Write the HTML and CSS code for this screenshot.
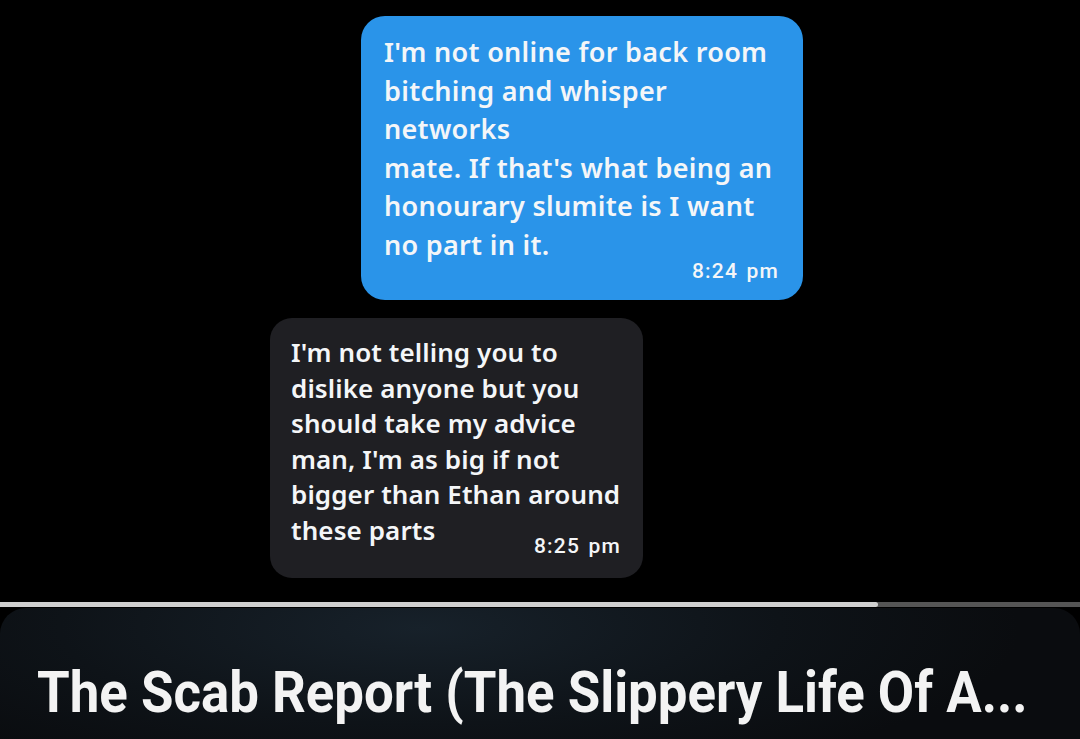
FILE: index.html
```html
<!DOCTYPE html>
<html>
<head>
<meta charset="utf-8">
<link rel="stylesheet" href="styles.css">
</head>
<body>
<div class="screen">
  <div class="chat">
    <div class="bubble sent">
      <div class="msg">I'm not online for back room<br>bitching and whisper<br>networks<br>mate. If that's what being an<br>honourary slumite is I want<br>no part in it.</div>
      <div class="time">8:24 pm</div>
    </div>
    <div class="bubble recv">
      <div class="msg">I'm not telling you to<br>dislike anyone but you<br>should take my advice<br>man, I'm as big if not<br>bigger than Ethan around<br>these parts</div>
      <div class="time">8:25 pm</div>
    </div>
  </div>
  <div class="progress"><div class="played"></div></div>
  <div class="panel">
    <div class="title"><span>The Scab Report (The Slippery Life Of A...</span></div>
  </div>
</div>
</body>
</html>
```

FILE: styles.css
```css
html, body {
  margin: 0;
  padding: 0;
  background: #000;
}
.screen {
  width: 1080px;
  height: 739px;
  overflow: hidden;
  display: flex;
  flex-direction: column;
  background: #000;
}
.chat {
  height: 602px;
  display: flex;
  flex-direction: column;
  padding-top: 16px;
  box-sizing: border-box;
}
.bubble {
  box-sizing: border-box;
  display: flex;
  flex-direction: column;
  color: #f4f6f8;
  font-family: "Noto Sans", sans-serif;
  font-weight: 600;
}
.sent {
  margin-left: 361px;
  width: 442px;
  height: 284px;
  background: #2a94e9;
  border-radius: 24px;
  padding: 17px 24px 0 23px;
  font-size: 27px;
  line-height: 38.5px;
  letter-spacing: 0.3px;
}
.recv {
  margin-left: 270px;
  margin-top: 18px;
  width: 373px;
  height: 260px;
  background: #1f1f23;
  border-radius: 22px;
  padding: 17px 22px 0 21px;
  font-size: 26px;
  line-height: 35.5px;
  letter-spacing: 0.1px;
}
.time {
  align-self: flex-end;
  font-family: Roboto, "Liberation Sans", sans-serif;
  font-weight: 500;
  font-size: 21px;
  line-height: 24px;
  letter-spacing: 1.2px;
  word-spacing: 2px;
}
.sent .time {
  margin-top: -5px;
}
.recv .time {
  margin-top: -14px;
}
.progress {
  height: 5px;
  background: #555;
  margin-bottom: 1px;
}
.played {
  width: 878px;
  height: 5px;
  background: #cfcfcf;
  border-radius: 0 3px 3px 0;
}
.panel {
  flex: 1;
  border-radius: 26px 26px 0 0;
  background: radial-gradient(ellipse 600px 160px at 420px 20px, #17212a 0%, #0e1318 60%, #0a0c0f 100%);
  display: flex;
  align-items: center;
  padding-left: 37px;
}
.title {
  color: #f3f3f3;
  font-family: Roboto, "Liberation Sans", sans-serif;
  font-weight: 700;
  font-size: 58px;
  line-height: 60px;
  white-space: nowrap;
  margin-top: 36px;
}
.title span {
  display: inline-block;
  transform: scaleX(0.91);
  transform-origin: left center;
}
```
